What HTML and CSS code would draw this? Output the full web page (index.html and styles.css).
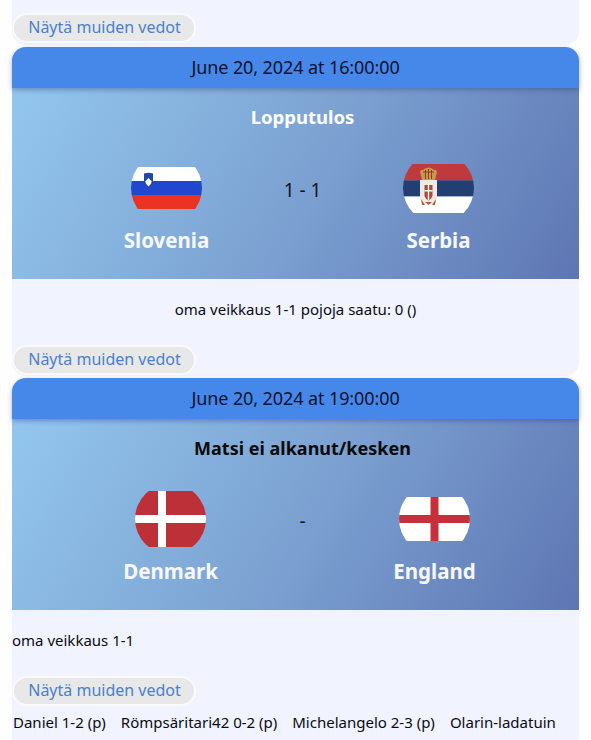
FILE: index.html
```html
<!DOCTYPE html>
<html lang="fi">
<head>
<meta charset="utf-8">
<title>Vedot</title>
<link rel="stylesheet" href="styles.css">
</head>
<body>
<div class="page">
  <section class="card card-tail">
    <button class="more">Näytä muiden vedot</button>
  </section>

  <section class="card">
    <header class="date">June 20, 2024 at 16:00:00</header>
    <div class="hero">
      <h2 class="status status-final">Lopputulos</h2>
      <div class="teams">
        <div class="team">
          <div class="flag-box">
            <svg class="flag" width="71" height="42" viewBox="0 0 71 42">
              <rect width="71" height="14" fill="#fff"/>
              <rect y="14" width="71" height="14" fill="#2147cf"/>
              <rect y="28" width="71" height="14" fill="#ea3323"/>
              <path d="M13 6.500q4.500-1.500 9 0v8q0 4.500-4.500 6.500q-4.500-2-4.500-6.500z" fill="#2147a8"/>
              <path d="M14.200 14.500l3.300-3.500 3.300 3.500q-.5 3-3.300 5q-2.800-2-3.300-5z" fill="#fff"/>
            </svg>
          </div>
          <div class="name">Slovenia</div>
        </div>
        <div class="score">1 - 1</div>
        <div class="team">
          <div class="flag-box">
            <svg class="flag" width="71" height="49" viewBox="0 0 71 49">
              <rect width="71" height="16.500" fill="#c0393f"/>
              <rect y="16.500" width="71" height="16" fill="#223e72"/>
              <rect y="32.500" width="71" height="16.500" fill="#fff"/>
              <path d="M17 8q1-3 3-2l2-1.500 3.500-1 3.500 1 2 1.500q2-1 3 2l-2 8H19z" fill="#c8994a"/>
              <path d="M20 8h11M22.500 6v9M25.500 5v10M28.500 6v9" stroke="#8f3a2c" stroke-width="1" fill="none"/>
              <path d="M17 16h17v19q-1 3-3.500 5h-10q-2.500-2-3.500-5z" fill="#f1e9e4"/>
              <path d="M21.500 21h8v11q-1 3-4 4.500q-3-1.500-4-4.500z" fill="#b3463a"/>
              <path d="M24.800 21h1.400v15h-1.400zM21.500 26h8v1.400h-8z" fill="#fff"/>
              <path d="M18 35l4 6h-3zM33 35l-4 6h3zM22 38h7l-3.500 3z" fill="#b5593a"/>
            </svg>
          </div>
          <div class="name">Serbia</div>
        </div>
      </div>
    </div>
    <p class="guess guess-center">oma veikkaus 1-1 pojoja saatu: 0 ()</p>
    <button class="more">Näytä muiden vedot</button>
  </section>

  <section class="card card-last">
    <header class="date">June 20, 2024 at 19:00:00</header>
    <div class="hero">
      <h2 class="status">Matsi ei alkanut/kesken</h2>
      <div class="teams teams-tight">
        <div class="team">
          <div class="flag-box">
            <svg class="flag" width="71" height="56" viewBox="0 0 71 56">
              <rect width="71" height="56" fill="#bd3038"/>
              <rect x="23" width="8" height="56" fill="#fff"/>
              <rect y="24" width="71" height="8" fill="#fff"/>
            </svg>
          </div>
          <div class="name">Denmark</div>
        </div>
        <div class="score">-</div>
        <div class="team">
          <div class="flag-box">
            <svg class="flag" width="71" height="44" viewBox="0 0 71 44">
              <rect width="71" height="44" fill="#fff"/>
              <rect x="31.500" width="8" height="44" fill="#c5303a"/>
              <rect y="18" width="71" height="8" fill="#c5303a"/>
            </svg>
          </div>
          <div class="name">England</div>
        </div>
      </div>
    </div>
    <p class="guess">oma veikkaus 1-1</p>
    <button class="more">Näytä muiden vedot</button>
    <ul class="others">
      <li>Daniel 1-2 (p)</li>
      <li>Römpsäritari42 0-2 (p)</li>
      <li>Michelangelo 2-3 (p)</li>
      <li>Olarin-ladatuin</li>
    </ul>
  </section>
</div>
</body>
</html>
```

FILE: styles.css
```css
* {
  box-sizing: border-box;
}

html,
body {
  margin: 0;
  height: 740px;
  overflow: hidden;
  background: #fefefe;
}

body {
  font-family: "Noto Sans", "Liberation Sans", sans-serif;
  color: #0b0b12;
}

.page {
  display: flex;
  flex-direction: column;
  gap: 2px;
  padding: 0 12px;
}

.card {
  background: #f1f3fe;
  border-radius: 14px;
  padding-bottom: 1px;
}

.card-tail {
  height: 45px;
  padding-top: 13px;
  border-radius: 0 0 14px 14px;
}

.card-last {
  padding-bottom: 40px;
}

.date {
  position: relative;
  z-index: 1;
  height: 41px;
  padding-bottom: 2px;
  display: flex;
  align-items: center;
  justify-content: center;
  background: #4688ea;
  border-radius: 14px 14px 0 0;
  font-size: 18px;
  letter-spacing: -0.1px;
  color: #0a1230;
  box-shadow: 0 2px 5px rgba(40, 60, 110, 0.4);
}

.hero {
  height: 191px;
  padding-top: 18px;
  padding-left: 14px;
  background: linear-gradient(120deg, #93c7ee 0%, #7ca2d2 50%, #5e76b3 100%);
}

.status {
  margin: 0;
  height: 22px;
  line-height: 22px;
  text-align: center;
  font-size: 18px;
  font-weight: 700;
  color: #0a0a0a;
}

.status-final {
  color: #fff;
  font-size: 18.500px;
}

.teams {
  display: flex;
  justify-content: center;
  gap: 68px;
  margin-top: 32px;
}

.teams-tight {
  gap: 64px;
}

.team {
  width: 100px;
  display: flex;
  flex-direction: column;
  align-items: center;
}

.flag-box {
  height: 56px;
  display: flex;
  align-items: center;
  justify-content: center;
}

.flag {
  display: block;
  clip-path: circle(35.500px);
}

.name {
  margin-top: 12px;
  line-height: 24px;
  font-size: 20.500px;
  font-weight: 700;
  color: #f6f8fd;
  white-space: nowrap;
}

.score {
  width: 36px;
  height: 60px;
  display: flex;
  align-items: center;
  justify-content: center;
  font-size: 19px;
  white-space: nowrap;
  color: #14161c;
}

.guess {
  margin: 0;
  height: 66px;
  padding-bottom: 6px;
  display: flex;
  align-items: center;
  font-size: 15px;
}

.guess-center {
  justify-content: center;
}

.more {
  display: block;
  width: 184px;
  height: 30px;
  padding: 0 0 2px 1px;
  background: #e8e8e8;
  border: 2px solid #fafafd;
  border-radius: 15px;
  font-family: inherit;
  font-size: 16px;
  color: #4a80cf;
}

.others {
  list-style: none;
  margin: 0;
  padding: 4px 0 0 1px;
  display: flex;
  gap: 15px;
  font-size: 15px;
  line-height: 24px;
  white-space: nowrap;
}
```
